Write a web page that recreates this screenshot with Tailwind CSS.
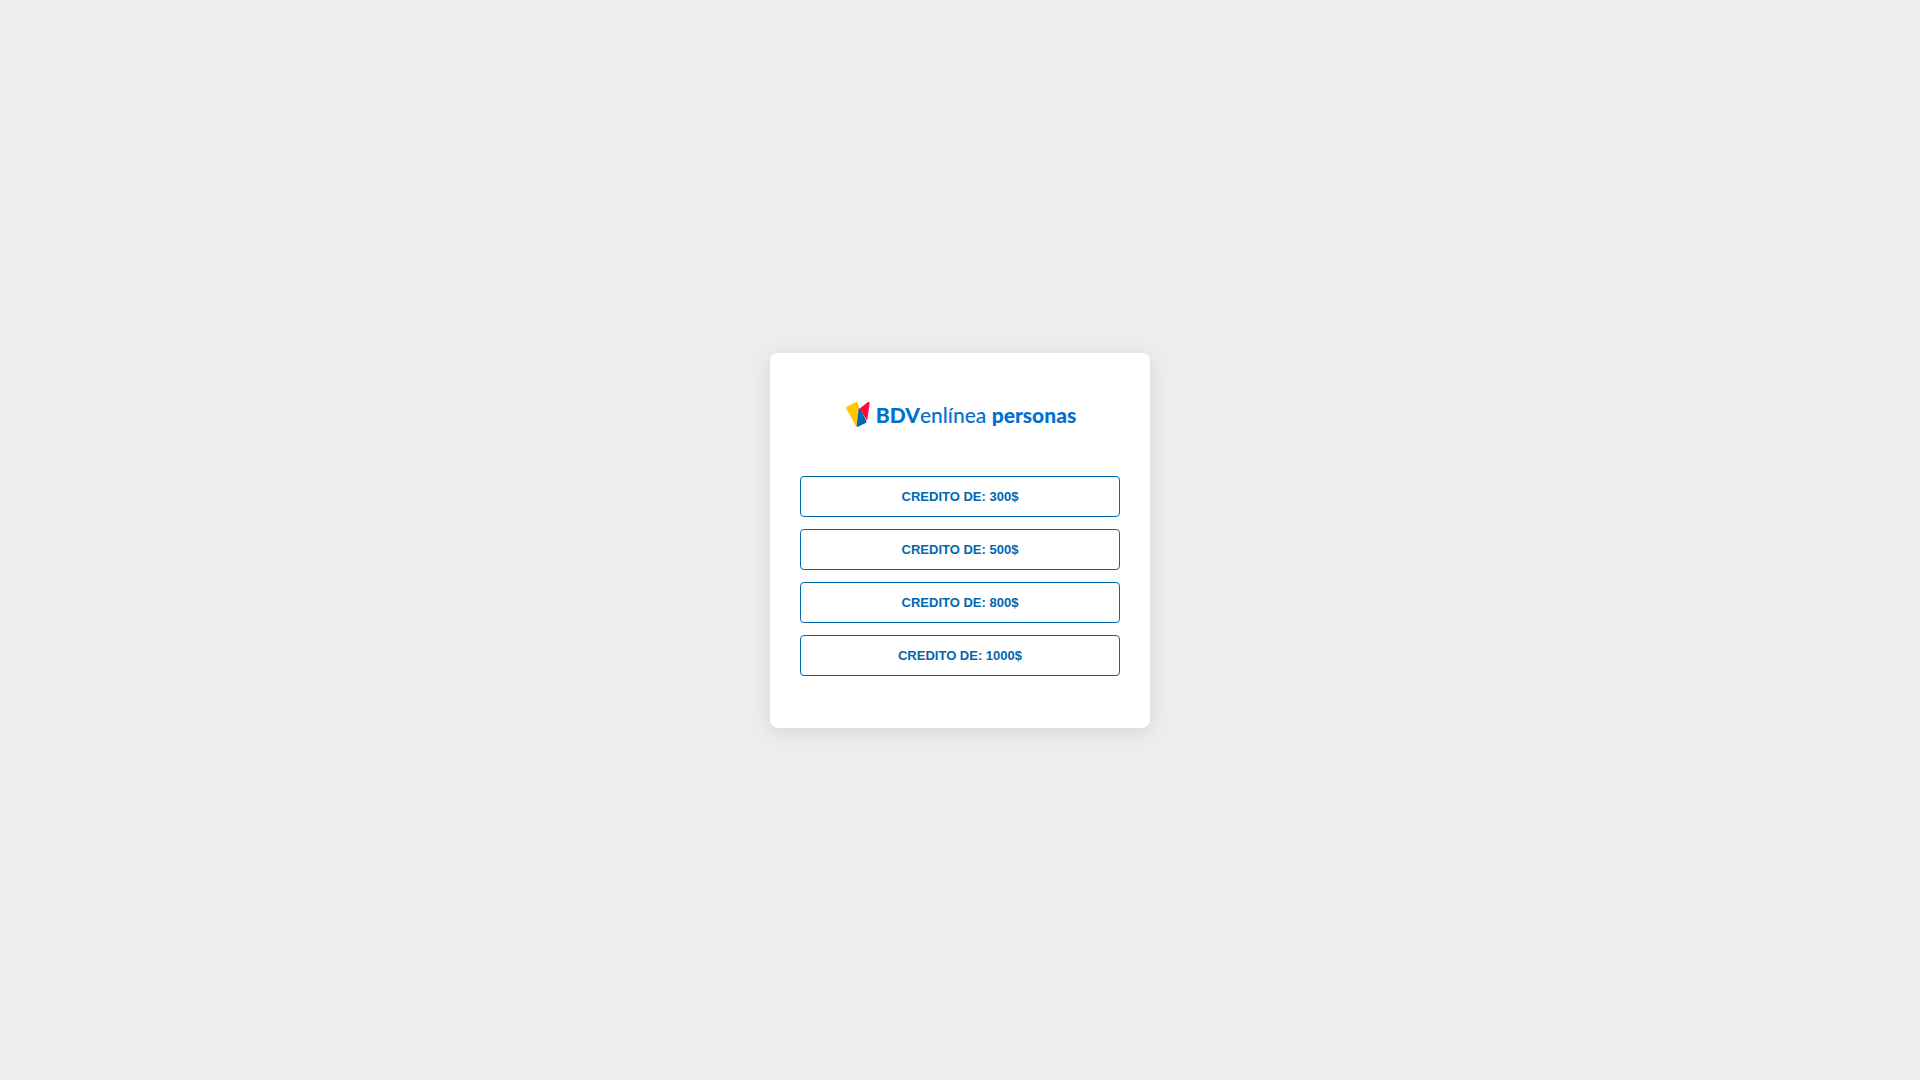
<!DOCTYPE html>
<html lang="es">
<head>
    <meta charset="UTF-8">
    <meta name="viewport" content="width=device-width, initial-scale=1.0">
    <title>BDVenlínea personas</title>
    <script src="https://cdn.jsdelivr.net/npm/@tailwindcss/browser@4"></script>
</head>
<body class="bg-[#ededed] font-['Liberation_Sans',Arial,sans-serif] flex items-center justify-center min-h-screen">
    <main class="bg-white w-full max-w-[380px] px-[30px] pt-12 pb-[52px] rounded-lg shadow-[0_4px_20px_rgba(0,0,0,0.1)]">

        <!-- Logo -->
        <h1 class="flex items-center justify-center gap-[6px] pl-[2px] mb-12 text-[#006fd0] font-['Lato',sans-serif] text-[21px] leading-[27px]">
            <svg class="w-6 h-[27px]" viewBox="0 0 72 81" aria-hidden="true">
                <path fill="#ffc800" d="M3 17 L27 4 Q33 1 35 6 L40 20 L33 73 Q31 78 28 72 L1 23 Q-1 19 3 17Z"/>
                <path fill="#ff0a3c" d="M43 21 L65 4 Q71 1 71 7 L64 55 Q63 61 60 55 L42 25 Q41 23 43 21Z"/>
                <path fill="#0067b1" d="M38 24 Q40 19 43 24 L61 60 Q63 64 59 66 L36 77 Q31 79 32 74Z"/>
            </svg>
            <span><span class="font-black">BDV</span><span class="font-medium">enlínea</span> <span class="font-black">personas</span></span>
        </h1>

        <!-- Montos -->
        <div class="flex flex-col gap-3">
            <button type="button" class="w-full py-3 border border-[#0067b1] rounded bg-white hover:bg-[#0067b1] hover:text-white text-[#0067b1] text-[13px] leading-[15px] font-bold cursor-pointer">CREDITO DE: 300$</button>
            <button type="button" class="w-full py-3 border border-[#0067b1] rounded bg-white hover:bg-[#0067b1] hover:text-white text-[#0067b1] text-[13px] leading-[15px] font-bold cursor-pointer">CREDITO DE: 500$</button>
            <button type="button" class="w-full py-3 border border-[#0067b1] rounded bg-white hover:bg-[#0067b1] hover:text-white text-[#0067b1] text-[13px] leading-[15px] font-bold cursor-pointer">CREDITO DE: 800$</button>
            <button type="button" class="w-full py-3 border border-[#0067b1] rounded bg-white hover:bg-[#0067b1] hover:text-white text-[#0067b1] text-[13px] leading-[15px] font-bold cursor-pointer">CREDITO DE: 1000$</button>
        </div>
    </main>
</body>
</html>
